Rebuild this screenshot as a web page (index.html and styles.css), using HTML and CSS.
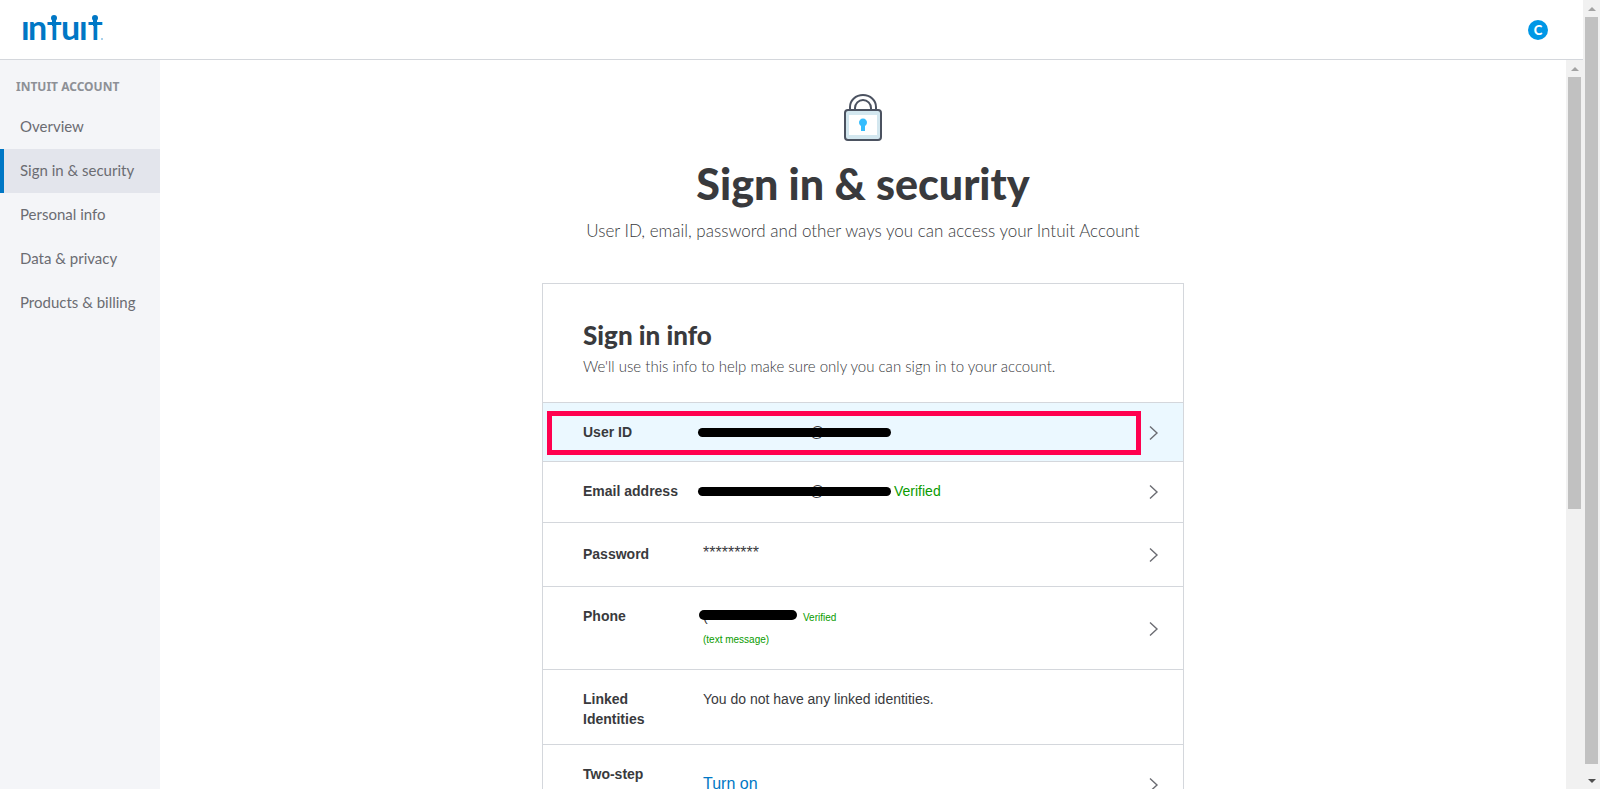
FILE: index.html
```
<!DOCTYPE html>
<html lang="en">
<head>
<meta charset="utf-8">
<title>Intuit Account</title>
<link rel="stylesheet" href="styles.css">
</head>
<body>
<div class="page">
  <header class="header">
    <a class="logo" href="#" aria-label="Intuit">
      <svg width="84" height="32" viewBox="0 0 84 32">
        <text class="logo-text" y="28"><tspan x="-1">ı</tspan><tspan x="6">n</tspan><tspan class="logo-t" x="25">T</tspan><tspan x="39">u</tspan><tspan x="57">ı</tspan><tspan class="logo-t" x="66">T</tspan></text>
        <path d="M30 8h4v6h-4zM71 8h4v6h-4z"/>
        <circle cx="32" cy="6" r="3"/>
        <circle cx="73" cy="6" r="3"/>
        <circle class="logo-mark" cx="80" cy="27" r="1"/>
      </svg>
    </a>
    <button class="avatar" type="button">C</button>
  </header>
  <div class="body">
    <nav class="sidebar">
      <h5 class="nav-title">INTUIT ACCOUNT</h5>
      <a class="nav" href="#">Overview</a>
      <a class="nav active" href="#">Sign in &amp; security</a>
      <a class="nav" href="#">Personal info</a>
      <a class="nav" href="#">Data &amp; privacy</a>
      <a class="nav" href="#">Products &amp; billing</a>
    </nav>
    <main class="content">
      <svg class="lock" width="40" height="48" viewBox="0 0 40 48">
        <path d="M7 16v-3a13 12 0 0 1 26 0v3M12 16v-2a8 8 0 0 1 16 0v2" fill="none" stroke="#4b5260" stroke-width="2"/>
        <rect x="2" y="16" width="36" height="30" rx="3" fill="#d3e7ef" stroke="#4b5260" stroke-width="2"/>
        <rect x="6" y="21" width="28" height="20" fill="#fff"/>
        <path d="M18 37v-5a4 4 0 1 1 4 0v5z" fill="#35bdfd"/>
      </svg>
      <h1>Sign in &amp; security</h1>
      <p class="intro">User ID, email, password and other ways you can access your Intuit Account</p>
      <section class="card">
        <div class="card-head">
          <h2>Sign in info</h2>
          <p>We'll use this info to help make sure only you can sign in to your account.</p>
        </div>
        <a class="row selected" href="#">
          <span class="label">User ID</span>
          <span class="value"><span class="hidden-text">@</span></span>
          <svg class="chevron" width="10" height="16" viewBox="0 0 10 16"><path d="M1 2.5l7 6.5-7 6.5"/></svg>
          <span class="marker"></span>
        </a>
        <a class="row email" href="#">
          <span class="label">Email address</span>
          <span class="value"><span class="hidden-text">@</span><span class="ok">Verified</span></span>
          <svg class="chevron" width="10" height="16" viewBox="0 0 10 16"><path d="M1 2.5l7 6.5-7 6.5"/></svg>
        </a>
        <a class="row password" href="#">
          <span class="label">Password</span>
          <span class="value stars">*********</span>
          <svg class="chevron" width="10" height="16" viewBox="0 0 10 16"><path d="M1 2.5l7 6.5-7 6.5"/></svg>
        </a>
        <a class="row phone" href="#">
          <span class="label">Phone</span>
          <span class="value"><span class="hidden-text short">(</span><small class="ok">Verified</small><small class="ok note">(text message)</small></span>
          <svg class="chevron" width="10" height="16" viewBox="0 0 10 16"><path d="M1 2.5l7 6.5-7 6.5"/></svg>
        </a>
        <div class="row linked">
          <span class="label">Linked Identities</span>
          <span class="value">You do not have any linked identities.</span>
        </div>
        <a class="row" href="#">
          <span class="label">Two-step</span>
          <span class="value turn-on">Turn on</span>
          <svg class="chevron" width="10" height="16" viewBox="0 0 10 16"><path d="M1 2.5l7 6.5-7 6.5"/></svg>
        </a>
      </section>
    </main>
    <div class="scrollbar inner" aria-hidden="true">
      <span class="arrow up"></span>
      <span class="thumb"></span>
    </div>
  </div>
</div>
<div class="scrollbar outer" aria-hidden="true">
  <span class="arrow up"></span>
  <span class="thumb"></span>
  <span class="arrow down"></span>
</div>
</body>
</html>
```
FILE: styles.css
```
* { box-sizing: border-box; }
body {
  display: flex;
  height: 100vh;
  margin: 0;
  overflow: hidden;
  color: #393a3d;
  background: #fff;
  font-family: Lato, "Open Sans", sans-serif;
}
h1, h2, h5, p { margin: 0; }
a { color: inherit; text-decoration: none; }

.page { display: flex; flex: 1; flex-direction: column; min-width: 0; }
.header {
  display: flex;
  flex: none;
  align-items: center;
  justify-content: space-between;
  height: 60px;
  padding: 0 35px 0 22px;
  border-bottom: 1px solid #d4d7dc;
}
.logo svg { display: block; margin-bottom: 4px; fill: #0077c5; overflow: visible; }
.logo-text { font: bold 34px Lato, sans-serif; }
.logo-t { font-size: 24px; font-weight: 900; }
.logo-mark { fill: #8cc2e6; }
.avatar {
  width: 20px;
  height: 20px;
  padding: 0;
  border: 0;
  border-radius: 50%;
  color: #fff;
  background: #0097e6;
  font: 900 13px/20px Lato, sans-serif;
}

.body { display: flex; flex: 1; min-height: 0; }
.sidebar { flex: none; width: 160px; padding-top: 17px; background: #f4f5f8; }
.nav-title {
  padding: 0 16px;
  color: #8d9096;
  font: bold 12px/20px "Noto Sans", sans-serif;
  margin-bottom: 8px;
}
.nav {
  display: block;
  padding: 0 16px 2px;
  border-left: 4px solid transparent;
  color: #6b6c72;
  font-size: 15px;
  line-height: 42px;
}
.active { border-left-color: #0077c5; background: #e3e5ec; }

.content {
  display: flex;
  flex: 1;
  flex-direction: column;
  align-items: center;
  min-width: 0;
  padding-top: 34px;
  overflow: hidden;
}
.lock { flex: none; }
h1 { margin-top: 16px; font-size: 43px; font-weight: 900; line-height: 52px; }
.intro { margin-top: 9px; font-size: 17px; font-weight: 300; line-height: 24px; }

.card {
  width: 100%;
  max-width: 642px;
  margin-top: 40px;
  border: 1px solid #d4d7dc;
  font: 14px/20px "Liberation Sans", Arial, sans-serif;
}
.card-head {
  padding: 34px 40px 26px;
  font-family: Lato, sans-serif;
}
h2 { font-size: 26px; font-weight: 900; line-height: 34px; }
.card-head p { margin-top: 4px; font-size: 15px; font-weight: 300; line-height: 20px; }

.row {
  display: grid;
  grid-template-columns: 100px 1fr 10px;
  column-gap: 20px;
  position: relative;
  padding: 19px 24px 19px 40px;
  border-top: 1px solid #d4d7dc;
}
.label { font-weight: bold; }
.chevron { align-self: center; fill: none; stroke: #6b6c72; stroke-width: 1.4; }
.selected { background: #ebf8ff; }
.marker {
  position: absolute;
  inset: 8px 42px 6px 4px;
  border: 5px solid #ff004f;
}
.email { padding-bottom: 21px; }
.password { padding: 21px 24px 22px 40px; }
.stars { font-size: 16px; line-height: 18px; }
.phone { padding-bottom: 19px; }
.linked { padding-bottom: 15px; }
.turn-on { padding: 10px 0; color: #0077c5; font-size: 16px; }

.ok { color: #0a9b00; }
small { font-size: 10px; }
.note { display: block; margin-top: 2px; }

/* text under a thick black stroke */
.hidden-text {
  display: inline-block;
  position: relative;
  width: 191px;
  padding-left: 107px;
}
.hidden-text::after {
  content: "";
  position: absolute;
  top: 6px;
  left: -5px;
  width: 193px;
  height: 9px;
  border-radius: 5px;
  background: #000;
}
.short { width: 100px; padding-left: 0; }
.short::after { top: 4px; left: -4px; width: 98px; height: 10px; }

.scrollbar {
  display: flex;
  flex: none;
  flex-direction: column;
  align-items: center;
  width: 17px;
  background: #f1f1f1;
}
.arrow { display: flex; flex: none; align-items: center; justify-content: center; height: 17px; }
.arrow::after {
  content: "";
  border: 4px solid transparent;
  border-top: 0;
  border-bottom-color: #a3a3a3;
}
.down::after { border-top: 4px solid #505050; border-bottom: 0; }
.thumb { width: 13px; background: #c1c1c1; }
.inner .thumb { height: 432px; }
.outer .thumb { flex: 1; margin-bottom: 8px; }
```
